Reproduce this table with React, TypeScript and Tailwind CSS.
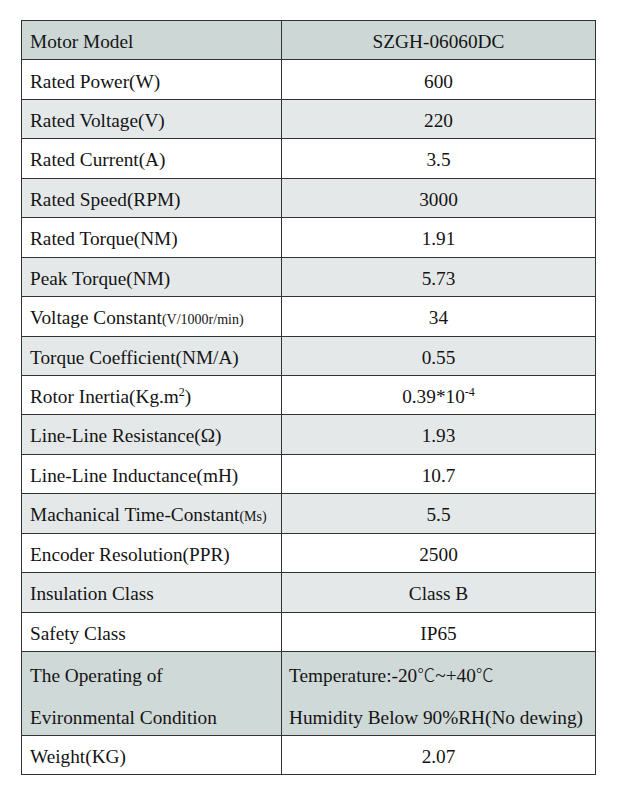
import React from "react";

type Row = {
  label: React.ReactNode;
  value: React.ReactNode;
  bg: string;
};

const sm = (t: string) => <span className="text-[14px]">{t}</span>;

const rows: Row[] = [
  { label: "Motor Model", value: "SZGH-06060DC", bg: "bg-[#cdd8d6]" },
  { label: "Rated Power(W)", value: "600", bg: "bg-white" },
  { label: "Rated Voltage(V)", value: "220", bg: "bg-[#e4e8e8]" },
  { label: "Rated Current(A)", value: "3.5", bg: "bg-white" },
  { label: "Rated Speed(RPM)", value: "3000", bg: "bg-[#e4e8e8]" },
  { label: "Rated Torque(NM)", value: "1.91", bg: "bg-white" },
  { label: "Peak Torque(NM)", value: "5.73", bg: "bg-[#e4e8e8]" },
  {
    label: (
      <>
        Voltage Constant{sm("(V/1000r/min)")}
      </>
    ),
    value: "34",
    bg: "bg-white",
  },
  { label: "Torque Coefficient(NM/A)", value: "0.55", bg: "bg-[#e4e8e8]" },
  {
    label: (
      <>
        Rotor Inertia(Kg.m<sup className="text-[12px] top-[-7px]">2</sup>)
      </>
    ),
    value: (
      <>
        0.39*10<sup className="text-[12px] top-[-7px]">-4</sup>
      </>
    ),
    bg: "bg-white",
  },
  { label: "Line-Line Resistance(Ω)", value: "1.93", bg: "bg-[#e4e8e8]" },
  { label: "Line-Line Inductance(mH)", value: "10.7", bg: "bg-white" },
  {
    label: (
      <>
        Machanical Time-Constant{sm("(Ms)")}
      </>
    ),
    value: "5.5",
    bg: "bg-[#e4e8e8]",
  },
  { label: "Encoder Resolution(PPR)", value: "2500", bg: "bg-white" },
  { label: "Insulation Class", value: "Class B", bg: "bg-[#e4e8e8]" },
  { label: "Safety Class", value: "IP65", bg: "bg-white" },
];

const deg = (
  <span className="font-['Noto_Sans_CJK_SC'] font-light text-[18px] leading-none">℃</span>
);

export default function App() {
  return (
    <div
      className="w-[621px] h-[793px] bg-white pt-[20px] pl-[21px] text-[#141414]"
      style={{ fontFamily: '"Liberation Serif", "DejaVu Serif", "Noto Sans CJK SC", serif' }}
    >
      <table className="w-[574px] border-collapse border-[1.5px] border-[#333] text-[19.3px] table-fixed">
        <colgroup>
          <col className="w-[260px]" />
          <col className="w-[314px]" />
        </colgroup>
        <tbody>
          {rows.map((r, i) => (
            <tr key={i} className={`${r.bg} h-[39.45px]`}>
              <td className="border-[1.5px] border-[#333] pl-[8px] pt-[3px] leading-none align-middle whitespace-nowrap">
                {r.label}
              </td>
              <td className="border-[1.5px] border-[#333] text-center pt-[3px] leading-none align-middle whitespace-nowrap">
                {r.value}
              </td>
            </tr>
          ))}
          <tr className="bg-[#cfd9d8] h-[83px]">
            <td className="border-[1.5px] border-[#333] pl-[8px] pt-[3px] leading-[42px] align-middle whitespace-nowrap">
              <div className="h-[42px]">The Operating of</div>
              <div className="h-[38px]">Evironmental Condition</div>
            </td>
            <td className="border-[1.5px] border-[#333] pl-[7px] pt-[3px] leading-[42px] align-middle whitespace-nowrap">
              <div className="h-[42px]">Temperature:-20{deg}~+40{deg}</div>
              <div className="h-[38px]">Humidity Below 90%RH(No dewing)</div>
            </td>
          </tr>
          <tr className="bg-white h-[39px]">
            <td className="border-[1.5px] border-[#333] pl-[8px] pt-[3px] leading-none align-middle whitespace-nowrap">
              Weight(KG)
            </td>
            <td className="border-[1.5px] border-[#333] text-center pt-[3px] leading-none align-middle whitespace-nowrap">
              2.07
            </td>
          </tr>
        </tbody>
      </table>
    </div>
  );
}
